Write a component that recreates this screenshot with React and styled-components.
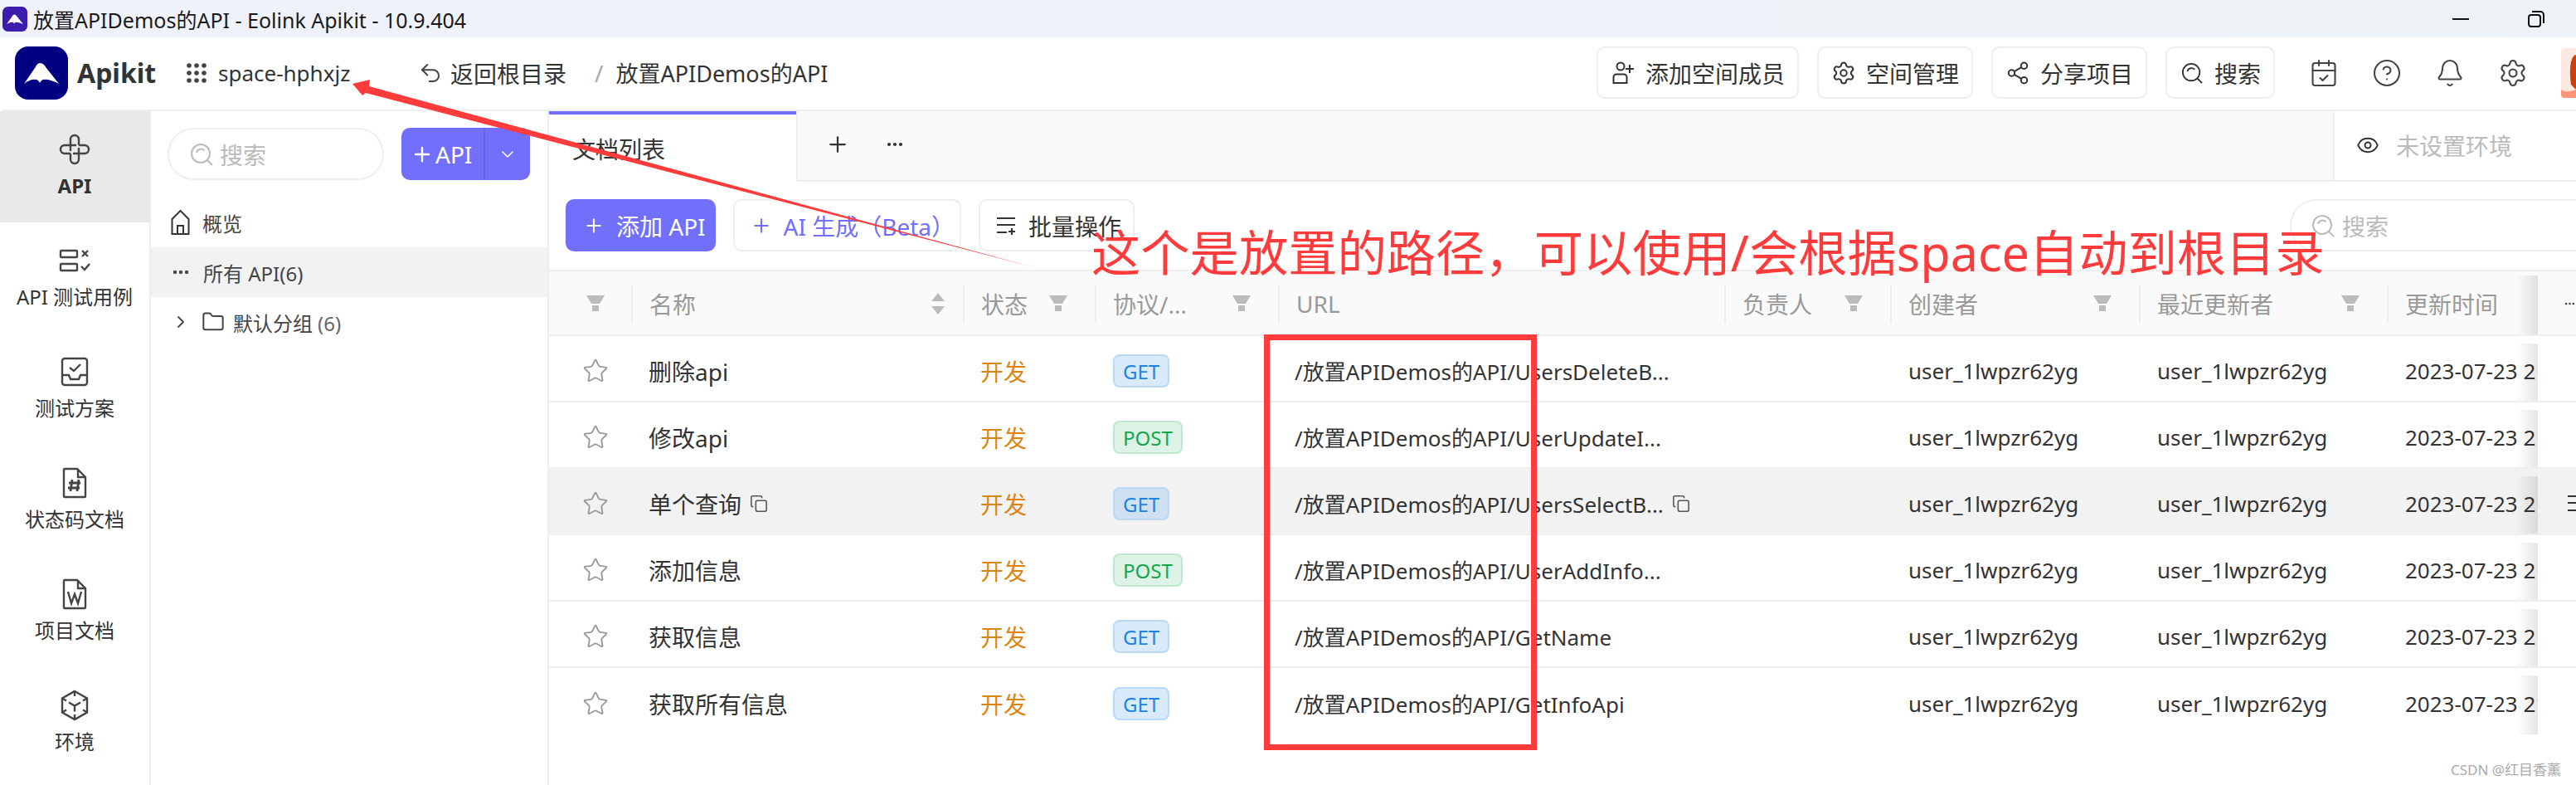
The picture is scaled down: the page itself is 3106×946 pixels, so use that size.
import styled, { createGlobalStyle } from "styled-components";
import {
    Bell, CalendarCheck, ChevronDown, ChevronRight, CircleHelp, Copy, Ellipsis, Eye, Folder,
    Plus, Settings, Share2, Star, Undo2,
} from "lucide-react";

const GlobalStyle = createGlobalStyle`
    html, body { margin: 0; padding: 0; background: #fff; }
    * { box-sizing: border-box; }
    body {
        font-family: "Noto Sans", "Noto Sans CJK SC", sans-serif;
        color: #333;
    }
`;

const Page = styled.div`
    position: relative;
    width: 3106px;
    height: 946px;
    overflow: hidden;
    display: flex;
    flex-direction: column;
    background: #fff;
`;

const TitleBar = styled.div`
    height: 45px;
    flex: none;
    display: flex;
    align-items: center;
    padding-left: 3px;
    background: linear-gradient(90deg, #eff2fa, #eef3f7);
    font-size: 25px;
    color: #1a1a1a;
`;
const TitleText = styled.span`
    margin-left: 7px;
    flex: 1;
    white-space: nowrap;
`;
const WinButton = styled.span`
    display: flex;
    width: 20px;
    justify-content: center;
    margin-right: ${(p) => p.$gap}px;
`;

const Header = styled.div`
    height: 89px;
    flex: none;
    margin-left: 2px;
    display: flex;
    align-items: center;
    padding-left: 16px;
    padding-bottom: 2px;
    border-bottom: 2px solid #eee;
    background: #fff;
`;
const Brand = styled.span`
    margin-left: 11px;
    width: 132px;
    font-size: 32px;
    font-weight: 700;
    color: #333;
`;
const SpaceSwitch = styled.div`
    width: 279px;
    flex: none;
    display: flex;
    align-items: center;
    gap: 14px;
    font-size: 26px;
`;
const Crumb = styled.span`
    font-size: ${(p) => p.$size || 28}px;
    white-space: nowrap;
    margin-left: ${(p) => p.$left || 0}px;
    color: ${(p) => p.$muted ? "#aaa" : "#333"};
`;
const Spacer = styled.div`
    flex: 1;
`;
const HeaderButton = styled.div`
    height: 63px;
    display: flex;
    align-items: center;
    gap: ${(p) => p.$gap ?? 14}px;
    padding: 0 15px 0 ${(p) => p.$left ?? 17}px;
    margin-left: 22px;
    border: 2px solid #eee;
    border-radius: 10px;
    font-size: 28px;
    white-space: nowrap;
`;
const HeaderIcons = styled.div`
    display: flex;
    gap: 40px;
    margin-left: 41px;
    margin-right: 40px;
    color: #444;
`;

const Body = styled.div`
    flex: 1;
    min-height: 0;
    display: flex;
`;

const Nav = styled.div`
    width: 182px;
    flex: none;
    border-right: 2px solid #eee;
`;
const NavItem = styled.div`
    height: 134px;
    padding-top: 22px;
    display: flex;
    flex-direction: column;
    align-items: center;
    gap: 2px;
    color: #444;
    background: ${(p) => p.$active ? "#e9e9e9" : "transparent"};
`;
const NavIcon = styled.div`
    height: 48px;
    display: flex;
    align-items: center;
    justify-content: center;
`;
const NavLabel = styled.div`
    line-height: 36px;
    font-size: 24px;
    white-space: nowrap;
    color: #333;
    font-weight: ${(p) => p.$active ? 700 : 400};
`;

const Tree = styled.div`
    width: 480px;
    flex: none;
    border-right: 2px solid #eee;
`;
const TreeTop = styled.div`
    display: flex;
    gap: 21px;
    padding: 20px 0 21px 20px;
`;
const SearchBox = styled.div`
    width: 261px;
    height: 63px;
    display: flex;
    align-items: center;
    gap: 8px;
    padding-left: 25px;
    border: 2px solid #eee;
    border-radius: 32px;
    font-size: 28px;
    color: #bbb;
`;
const SplitButton = styled.div`
    width: 155px;
    height: 63px;
    display: flex;
    border-radius: 10px;
    overflow: hidden;
    background: #7270fb;
    color: #fff;
    font-size: 28px;
`;
const SplitMain = styled.div`
    width: 101px;
    display: flex;
    align-items: center;
    gap: 2px;
    padding-left: 11px;
    border-right: 2px solid #6664e6;
`;
const SplitArrow = styled.div`
    flex: 1;
    display: flex;
    align-items: center;
    justify-content: center;
`;
const TreeRow = styled.div`
    height: 60px;
    display: flex;
    align-items: center;
    padding-left: 24px;
    gap: ${(p) => p.$gap ?? 15}px;
    font-size: 24px;
    color: #444;
    background: ${(p) => p.$active ? "#f2f2f2" : "transparent"};
`;
const Count = styled.span`
    color: #666;
    margin-left: 6px;
`;

const Main = styled.div`
    flex: 1;
    min-width: 0;
    display: flex;
    flex-direction: column;
`;
const TabBar = styled.div`
    height: 85px;
    flex: none;
    display: flex;
`;
const ActiveTab = styled.div`
    width: 298px;
    display: flex;
    align-items: center;
    padding-left: 28px;
    border-top: 4px solid #7270fb;
    font-size: 28px;
    color: #333;
`;
const TabRest = styled.div`
    flex: 1;
    display: flex;
    align-items: center;
    padding-left: 33px;
    gap: 42px;
    padding-bottom: 4px;
    color: #333;
    background: #fafafa;
    border-bottom: 2px solid #eee;
    border-left: 2px solid #eee;
`;
const EnvBox = styled.div`
    width: 293px;
    flex: none;
    display: flex;
    align-items: center;
    gap: 20px;
    padding: 0 0 4px 26px;
    margin-top: 2px;
    background: #fff;
    border-left: 2px solid #eee;
    border-bottom: 2px solid #eee;
    font-size: 28px;
    color: #bbb;
`;
const Toolbar = styled.div`
    height: 106px;
    flex: none;
    display: flex;
    align-items: flex-start;
    padding: 21px 0 0 20px;
    gap: 21px;
`;
const ToolButton = styled.div`
    height: 63px;
    display: flex;
    align-items: center;
    gap: ${(p) => p.$gap}px;
    padding: 0 ${(p) => p.$right}px 0 ${(p) => p.$left}px;
    border-radius: 10px;
    font-size: 28px;
    white-space: nowrap;
    border: 2px solid ${(p) => p.$primary ? "#7270fb" : "#eee"};
    background: ${(p) => p.$primary ? "#7270fb" : "#fff"};
    color: ${(p) => p.$primary ? "#fff" : p.$accent ? "#7270fb" : "#333"};
`;
const ToolSearch = styled.div`
    width: 345px;
    height: 63px;
    margin-left: auto;
    display: flex;
    align-items: center;
    gap: 9px;
    padding-left: 24px;
    border: 2px solid #eee;
    border-right: 0;
    border-radius: 32px 0 0 32px;
    font-size: 28px;
    color: #bbb;
`;

const COLUMNS = "99px 400px 159px 221px 538px 200px 300px 299px 182px 46px";

const TableHead = styled.div`
    height: 80px;
    flex: none;
    display: grid;
    grid-template-columns: ${COLUMNS};
    align-items: center;
    padding-top: 2px;
    background: #fafafa;
    border-top: 2px solid #eee;
    border-bottom: 2px solid #eee;
    font-size: 28px;
    color: #999;
`;
const HeadCell = styled.div`
    height: 45px;
    display: flex;
    align-items: center;
    justify-content: ${(p) => p.$first ? "flex-end" : "space-between"};
    padding: 0 ${(p) => p.$right ?? 33}px 0 20px;
    border-left: ${(p) => p.$first ? "0" : "2px solid #eee"};
`;
const FadeCell = styled.div`
    position: relative;
    height: 100%;
    display: flex;
    align-items: center;
    &::after {
        content: "";
        position: absolute;
        top: 3px;
        bottom: 0;
        right: 0;
        width: 26px;
        background: linear-gradient(90deg, rgba(0, 0, 0, 0), rgba(0, 0, 0, 0.1));
    }
`;
const HeadFade = styled(HeadCell)`
    flex: 1;
    padding: 0 0 0 20px;
`;
const Row = styled.div`
    height: 80px;
    flex: none;
    display: grid;
    grid-template-columns: ${COLUMNS};
    align-items: center;
    padding-top: 6px;
    font-size: 26px;
    color: #333;
    border-bottom: ${(p) => p.$last ? "0" : "2px solid #eee"};
    background: ${(p) => p.$hover ? "#f2f2f2" : "#fff"};
`;
const StarCell = styled.div`
    padding-left: 40px;
    display: flex;
    color: #999;
`;
const NameCell = styled.div`
    padding-left: 21px;
    display: flex;
    align-items: center;
    gap: 10px;
    font-size: 28px;
    white-space: nowrap;
`;
const Status = styled.div`
    padding-left: 21px;
    font-size: 28px;
    color: #dc8412;
`;
const TagCell = styled.div`
    padding-left: 22px;
    display: flex;
`;
const Tag = styled.span`
    height: 40px;
    padding: 0 10px;
    display: flex;
    align-items: center;
    border-radius: 8px;
    font-size: 24px;
    border: 2px solid ${(p) => p.$post ? "#bde8cd" : "#b9daf6"};
    background: ${(p) => p.$post ? "#ddf3e5" : p.$hover ? "#cfe0f0" : "#d9ebfb"};
    color: ${(p) => p.$post ? "#12a84f" : "#1c84e4"};
`;
const UrlCell = styled.div`
    padding-left: 20px;
    display: flex;
    align-items: center;
    gap: 10px;
    white-space: nowrap;
`;
const UserCell = styled.div`
    padding-left: 22px;
    white-space: nowrap;
`;
const TimeText = styled.span`
    padding-left: 22px;
    width: 182px;
    overflow: hidden;
    white-space: nowrap;
`;
const ActionCell = styled.div`
    padding-left: ${(p) => p.$left}px;
    display: flex;
    white-space: nowrap;
    color: #333;
`;

const RedBox = styled.div`
    position: absolute;
    left: 1524px;
    top: 403px;
    width: 329px;
    height: 501px;
    border: 7px solid #ff3b3b;
`;
const RedNote = styled.div`
    position: absolute;
    left: 1316px;
    top: 262px;
    font-size: 59.300px;
    line-height: 84px;
    white-space: nowrap;
    color: #ff3b3b;
`;
const ArrowLayer = styled.svg`
    position: absolute;
    left: 0;
    top: 0;
    pointer-events: none;
`;
const Watermark = styled.div`
    position: absolute;
    left: 2955px;
    top: 914px;
    font-size: 17px;
    line-height: 28px;
    color: #aaa;
    white-space: nowrap;
`;

const WING = "M30 20C34 20 36 23 38 26L53 45C46 41 38 39 34 40C32 40.5 31 42 30 44C29 42 28 40.5 26 40C21 39 16 41 11 45L24 26C26 23 27 20 30 20Z";

function Logo({ size, fill, radius }) {
    return (
        <svg width={size} height={size} viewBox="0 0 64 64" style={{ flex: "none" }}>
            <rect width="64" height="64" rx={radius} fill={fill} />
            <path d={WING} fill="#fff" />
        </svg>
    );
}

function GridDots() {
    const dots = [];
    for (let r = 0; r < 3; r++) {
        for (let c = 0; c < 3; c++) {
            dots.push(<circle key={`${r}${c}`} cx={3 + c * 9} cy={3 + r * 9} r="2.8" fill="#444" />);
        }
    }
    return <svg width="24" height="24" viewBox="0 0 24 24">{dots}</svg>;
}

function SearchGlyph({ color = "#bbb", size = 28 }) {
    return (
        <svg width={size} height={size} viewBox="0 0 28 28" fill="none" stroke={color} strokeWidth="2" style={{ flex: "none" }}>
            <circle cx="13" cy="13" r="11" />
            <path d="M8 12a5.5 5.5 0 0 1 9.5-2.5" />
            <path d="M21 21l6 6" />
        </svg>
    );
}

function AddMember() {
    return (
        <svg width="26" height="28" viewBox="0 0 26 28" fill="none" stroke="#333" strokeWidth="2">
            <circle cx="10" cy="6" r="4.5" />
            <path d="M1.5 26V19a3.5 3.5 0 0 1 3.5-3.5h9a3.5 3.5 0 0 1 3.5 3.5v7z" />
            <path d="M21 4v10M16 9h10" />
        </svg>
    );
}

function ApiIcon() {
    return (
        <svg width="38" height="38" viewBox="-1 -1 38 38" fill="none" stroke="#444" strokeWidth="2.4">
            <path d="M13 20V6a5 5 0 0 1 10 0v7" />
            <path d="M23 13h7a5 5 0 0 1 0 10H16" />
            <path d="M23 16v14a5 5 0 0 1-10 0v-7" />
            <path d="M13 23H6a5 5 0 0 1 0-10h14" />
        </svg>
    );
}

function CaseIcon() {
    return (
        <svg width="38" height="30" viewBox="0 0 38 30" fill="none" stroke="#444" strokeWidth="2.4">
            <rect x="2" y="3" width="20" height="8" rx="1" />
            <rect x="2" y="19" width="20" height="8" rx="1" />
            <path d="M28 3l7 7M35 3l-7 7" />
            <path d="M27 22l4 4 6-7" />
        </svg>
    );
}

function PlanIcon() {
    return (
        <svg width="34" height="36" viewBox="0 0 34 36" fill="none" stroke="#444" strokeWidth="2.4">
            <rect x="2" y="2" width="30" height="32" rx="3" />
            <path d="M2 22h8l2 5h10l2-5h8" />
            <path d="M11 13l5 4 8-8" />
        </svg>
    );
}

function CodeDocIcon() {
    return (
        <svg width="30" height="38" viewBox="0 0 30 38" fill="none" stroke="#444" strokeWidth="2.4">
            <path d="M3 2h15l10 10v23a1 1 0 0 1-1 1H3a1 1 0 0 1-1-1V3a1 1 0 0 1 1-1z" />
            <path d="M19 2v10h9" />
            <path d="M12 15l-2 14M20 15l-2 14M8 19h14M7 25h14" strokeWidth="2.8" />
        </svg>
    );
}

function WordDocIcon() {
    return (
        <svg width="30" height="38" viewBox="0 0 30 38" fill="none" stroke="#444" strokeWidth="2.4">
            <path d="M3 2h15l10 10v23a1 1 0 0 1-1 1H3a1 1 0 0 1-1-1V3a1 1 0 0 1 1-1z" />
            <path d="M19 2v10h9" />
            <path d="M7 16l4 14 4-11 4 11 4-14" />
        </svg>
    );
}

function CubeIcon() {
    return (
        <svg width="34" height="38" viewBox="0 0 34 38" fill="none" stroke="#444" strokeWidth="2.4">
            <path d="M17 2l15 8.500v17L17 36 2 27.500v-17z" />
            <path d="M17 2v6M17 30v6M2 10.500l5 3M32 10.500l-5 3M2 27.500l5-3M32 27.500l-5-3" />
            <path d="M10 15.500l7 4 7-4M17 19.500v7" />
        </svg>
    );
}

function HomeIcon() {
    return (
        <svg width="23" height="32" viewBox="0 0 23 32" fill="none" stroke="#333" strokeWidth="2" style={{ flex: "none" }}>
            <path d="M1.500 12L11.500 2l10 10v18h-20z" />
            <path d="M8 30V20h7v10" />
        </svg>
    );
}

function BatchIcon() {
    return (
        <svg width="24" height="24" viewBox="0 0 24 24" fill="none" stroke="#333" strokeWidth="2.2" style={{ flex: "none" }}>
            <path d="M1 3h22M1 11h22M1 20h12M19 15v8M15 19h8" />
        </svg>
    );
}

function Funnel() {
    return (
        <svg width="22" height="20" viewBox="0 0 22 20" fill="#bbb" style={{ flex: "none" }}>
            <path d="M0 0h22l-6 10H6z" />
            <rect x="7" y="12" width="8" height="7" />
        </svg>
    );
}

function SortArrows() {
    return (
        <svg width="16" height="26" viewBox="0 0 16 26" fill="#bbb" style={{ flex: "none" }}>
            <path d="M8 0l8 10H0zM8 26L0 16h16z" />
        </svg>
    );
}

function Avatar() {
    return (
        <svg width="18" height="60" viewBox="0 0 18 60" style={{ flex: "none" }}>
            <path d="M4 0H18V60H4a4 4 0 0 1-4-4V4a4 4 0 0 1 4-4z" fill="#fde9e2" />
            <path d="M18 8C10 10 10 30 12 44L18 50z" fill="#c9410f" />
            <path d="M0 50C6 54 12 52 18 50V60H4a4 4 0 0 1-4-4z" fill="#ff9478" />
        </svg>
    );
}

const navItems = [
    { label: "API", icon: <ApiIcon />, active: true },
    { label: "API 测试用例", icon: <CaseIcon /> },
    { label: "测试方案", icon: <PlanIcon /> },
    { label: "状态码文档", icon: <CodeDocIcon /> },
    { label: "项目文档", icon: <WordDocIcon /> },
    { label: "环境", icon: <CubeIcon /> },
];

const rows = [
    { name: "删除api", method: "GET", url: "/放置APIDemos的API/UsersDeleteB..." },
    { name: "修改api", method: "POST", url: "/放置APIDemos的API/UserUpdateI..." },
    { name: "单个查询", method: "GET", url: "/放置APIDemos的API/UsersSelectB...", hover: true },
    { name: "添加信息", method: "POST", url: "/放置APIDemos的API/UserAddInfo..." },
    { name: "获取信息", method: "GET", url: "/放置APIDemos的API/GetName" },
    { name: "获取所有信息", method: "GET", url: "/放置APIDemos的API/GetInfoApi", last: true },
];

const headers = [
    { label: "名称", sort: true },
    { label: "状态", filter: true },
    { label: "协议/...", filter: true },
    { label: "URL" },
    { label: "负责人", filter: true },
    { label: "创建者", filter: true },
    { label: "最近更新者", filter: true },
];

function App() {
    return (
        <Page>
            <GlobalStyle />
            <TitleBar>
                <Logo size={30} fill="#3b1cad" radius={14} />
                <TitleText>放置APIDemos的API - Eolink Apikit - 10.9.404</TitleText>
                <WinButton $gap={71}>
                    <svg width="20" height="2" viewBox="0 0 20 2"><rect width="20" height="2" fill="#111" /></svg>
                </WinButton>
                <WinButton $gap={38}>
                    <svg width="20" height="20" viewBox="0 0 20 20" fill="none" stroke="#111" strokeWidth="2">
                        <rect x="1" y="5" width="14" height="14" rx="3" />
                        <path d="M5 1h10a4 4 0 0 1 4 4v10" />
                    </svg>
                </WinButton>
            </TitleBar>

            <Header>
                <Logo size={64} fill="#000080" radius={16} />
                <Brand>Apikit</Brand>
                <SpaceSwitch><GridDots />space-hphxjz</SpaceSwitch>
                <Undo2 size={30} strokeWidth={1.6} color="#444" />
                <Crumb $left={9}>返回根目录</Crumb>
                <Crumb $left={34} $muted>/</Crumb>
                <Crumb $left={15} $size={27}>放置APIDemos的API</Crumb>
                <Spacer />
                <HeaderButton><AddMember />添加空间成员</HeaderButton>
                <HeaderButton $left={15} $gap={12}><Settings size={30} strokeWidth={1.6} />空间管理</HeaderButton>
                <HeaderButton $left={15} $gap={12}><Share2 size={30} strokeWidth={1.6} />分享项目</HeaderButton>
                <HeaderButton><SearchGlyph color="#333" size={26} />搜索</HeaderButton>
                <HeaderIcons>
                    <CalendarCheck size={36} strokeWidth={1.4} />
                    <CircleHelp size={36} strokeWidth={1.4} />
                    <Bell size={36} strokeWidth={1.4} />
                    <Settings size={36} strokeWidth={1.4} />
                </HeaderIcons>
                <Avatar />
            </Header>

            <Body>
                <Nav>
                    {navItems.map((item) => (
                        <NavItem key={item.label} $active={item.active}>
                            <NavIcon>{item.icon}</NavIcon>
                            <NavLabel $active={item.active}>{item.label}</NavLabel>
                        </NavItem>
                    ))}
                </Nav>

                <Tree>
                    <TreeTop>
                        <SearchBox><SearchGlyph />搜索</SearchBox>
                        <SplitButton>
                            <SplitMain><Plus size={28} strokeWidth={2} />API</SplitMain>
                            <SplitArrow><ChevronDown size={24} strokeWidth={1.6} /></SplitArrow>
                        </SplitButton>
                    </TreeTop>
                    <TreeRow><HomeIcon />概览</TreeRow>
                    <TreeRow $active><Ellipsis size={24} strokeWidth={2.4} />所有 API(6)</TreeRow>
                    <TreeRow $gap={10}>
                        <ChevronRight size={24} strokeWidth={1.8} />
                        <Folder size={28} strokeWidth={1.7} style={{ marginLeft: 3 }} />
                        <span>默认分组<Count>(6)</Count></span>
                    </TreeRow>
                </Tree>

                <Main>
                    <TabBar>
                        <ActiveTab>文档列表</ActiveTab>
                        <TabRest>
                            <Plus size={30} strokeWidth={1.8} />
                            <Ellipsis size={24} strokeWidth={2.2} />
                        </TabRest>
                        <EnvBox><Eye size={28} strokeWidth={1.7} color="#333" />未设置环境</EnvBox>
                    </TabBar>

                    <Toolbar>
                        <ToolButton $primary $left={19} $right={10} $gap={14}><Plus size={26} strokeWidth={2} />添加 API</ToolButton>
                        <ToolButton $accent $left={19} $right={6} $gap={14}><Plus size={26} strokeWidth={2} />AI 生成（Beta）</ToolButton>
                        <ToolButton $left={19} $right={14} $gap={15}><BatchIcon />批量操作</ToolButton>
                        <ToolSearch><SearchGlyph />搜索</ToolSearch>
                    </Toolbar>

                    <TableHead>
                        <HeadCell $first $right={32}><Funnel /></HeadCell>
                        {headers.map((h) => (
                            <HeadCell key={h.label} $right={h.sort ? 22 : 33}>
                                {h.label}
                                {h.filter && <Funnel />}
                                {h.sort && <SortArrows />}
                            </HeadCell>
                        ))}
                        <FadeCell><HeadFade>更新时间</HeadFade></FadeCell>
                        <ActionCell $left={31}><Ellipsis size={26} strokeWidth={2.2} color="#444" /></ActionCell>
                    </TableHead>

                    {rows.map((row) => (
                        <Row key={row.name} $hover={row.hover} $last={row.last}>
                            <StarCell><Star size={32} strokeWidth={1.4} /></StarCell>
                            <NameCell>{row.name}{row.hover && <Copy size={22} strokeWidth={1.7} color="#555" />}</NameCell>
                            <Status>开发</Status>
                            <TagCell><Tag $post={row.method === "POST"} $hover={row.hover}>{row.method}</Tag></TagCell>
                            <UrlCell>{row.url}{row.hover && <Copy size={22} strokeWidth={1.7} color="#555" />}</UrlCell>
                            <span />
                            <UserCell>user_1lwpzr62yg</UserCell>
                            <UserCell>user_1lwpzr62yg</UserCell>
                            <FadeCell><TimeText>2023-07-23 21:08:45</TimeText></FadeCell>
                            <ActionCell $left={35}>
                                {row.hover && <BatchIcon />}
                            </ActionCell>
                        </Row>
                    ))}
                </Main>
            </Body>

            <RedBox />
            <RedNote>这个是放置的路径，可以使用/会根据space自动到根目录</RedNote>
            <ArrowLayer width="3106" height="946" viewBox="0 0 3106 946">
                <polygon points="425,101 446,96 445,104 1246,322 441,112 437,115" fill="#ff3b3b" />
            </ArrowLayer>
            <Watermark>CSDN @红目香薰</Watermark>
        </Page>
    );
}

export default App;
